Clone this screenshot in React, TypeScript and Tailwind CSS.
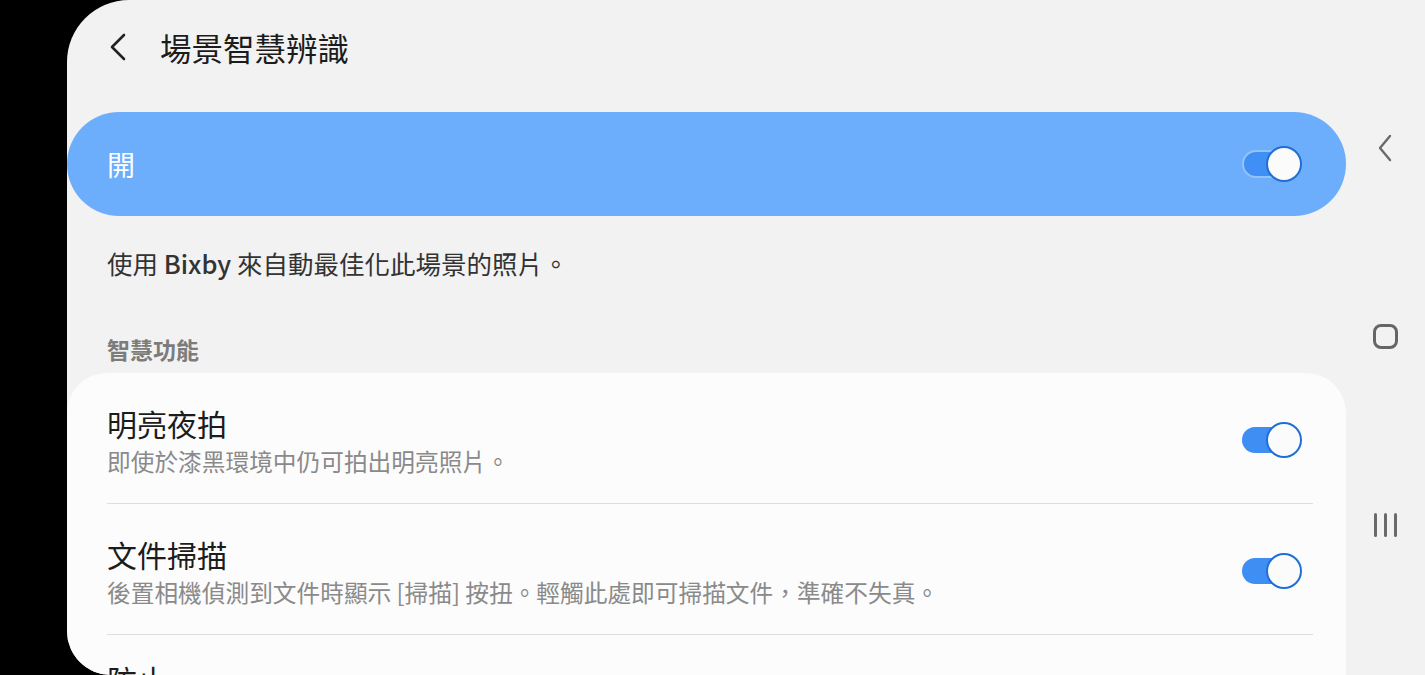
import React from 'react';

const font = { fontFamily: '"Noto Sans CJK TC", "Noto Sans", sans-serif' };

type ToggleProps = { onCard?: boolean };

// Samsung style switch, always on in this screen
const Toggle: React.FC<ToggleProps> = ({ onCard }) => (
  <div className="relative w-[60px] h-[36px] shrink-0">
    <div
      className={
        onCard
          ? 'absolute left-0 top-[4px] w-[56px] h-[28px] rounded-full bg-[#3f8ff4] border-2 border-[#93c3fb]'
          : 'absolute left-0 top-[5px] w-[56px] h-[26px] rounded-full bg-[#3e8ef4]'
      }
    />
    <div className="absolute right-0 top-0 w-[36px] h-[36px] rounded-full bg-[#fbfbfb] border-2 border-[#1f6fd6]" />
  </div>
);

type RowProps = { title: string; sub: string };

const FeatureRow: React.FC<RowProps> = ({ title, sub }) => (
  <div className="shrink-0">
    <div className="flex items-center pl-[40px] pr-[44px] pt-[30px] pb-[26px]">
      <div className="flex-1 min-w-0">
        <div className="text-[30px] leading-[40px] text-[#1c1c1c]">{title}</div>
        <div className="mt-[2px] text-[23.7px] leading-[32px] text-[#8a8a8a]">{sub}</div>
      </div>
      <Toggle />
    </div>
    <div className="ml-[40px] mr-[33px] h-px bg-[#dedede]" />
  </div>
);

const App: React.FC = () => {
  return (
    <div className="w-[1425px] h-[675px] bg-black overflow-hidden flex" style={font}>
      <div className="ml-[67px] flex-1 flex bg-[#f2f2f2] rounded-tl-[62px] rounded-bl-[44px] overflow-hidden">
        {/* main settings column */}
        <div className="w-[1279px] shrink-0 flex flex-col">
          <div className="h-[94px] shrink-0 flex items-center pl-[38px]">
            <svg width="26" height="30" viewBox="0 0 26 30">
              <path d="M19 3 L7 15 L19 27" fill="none" stroke="#222" strokeWidth="2.6" strokeLinecap="round" strokeLinejoin="round" />
            </svg>
            <div className="ml-[29px] text-[31.5px] leading-[40px] text-[#1c1c1c]">場景智慧辨識</div>
          </div>

          <div className="mt-[18px] h-[104px] shrink-0 rounded-[52px] bg-[#6caefb] flex items-center pl-[40px] pr-[44px]">
            <div className="flex-1 text-[28px] leading-[36px] text-white">開</div>
            <Toggle onCard />
          </div>

          <div className="shrink-0 pl-[40px] mt-[30px] text-[25.5px] leading-[34px] text-[#333]">
            使用 <span className="font-medium">Bixby</span> 來自動最佳化此場景的照片。
          </div>

          <div className="shrink-0 pl-[40px] mt-[53px] text-[23px] leading-[32px] font-bold text-[#7c7c7c]">智慧功能</div>

          <div className="mt-[8px] flex-1 shrink-0 bg-[#fcfcfc] rounded-t-[40px]">
            <FeatureRow title="明亮夜拍" sub="即使於漆黑環境中仍可拍出明亮照片。" />
            <FeatureRow title="文件掃描" sub="後置相機偵測到文件時顯示 [掃描] 按扭。輕觸此處即可掃描文件，準確不失真。" />
            <div className="pl-[40px] pt-[24px] text-[30px] leading-[40px] text-[#1c1c1c]">防止</div>
          </div>
        </div>

        {/* navigation bar */}
        <div className="flex-1 flex flex-col items-center">
          <div className="mt-[134px] mr-[2px]">
            <svg width="16" height="28" viewBox="0 0 16 28">
              <path d="M13 2 L3 14 L13 26" fill="none" stroke="#6a6a6a" strokeWidth="2.4" strokeLinecap="round" strokeLinejoin="round" />
            </svg>
          </div>
          <div className="mt-[162px] w-[25px] h-[25px] rounded-[8px] border-[3px] border-[#666]" />
          <div className="mt-[164px] flex gap-[7px]">
            <div className="w-[3px] h-[24px] rounded-full bg-[#6a6a6a]" />
            <div className="w-[3px] h-[24px] rounded-full bg-[#6a6a6a]" />
            <div className="w-[3px] h-[24px] rounded-full bg-[#6a6a6a]" />
          </div>
        </div>
      </div>
    </div>
  );
};

export default App;
